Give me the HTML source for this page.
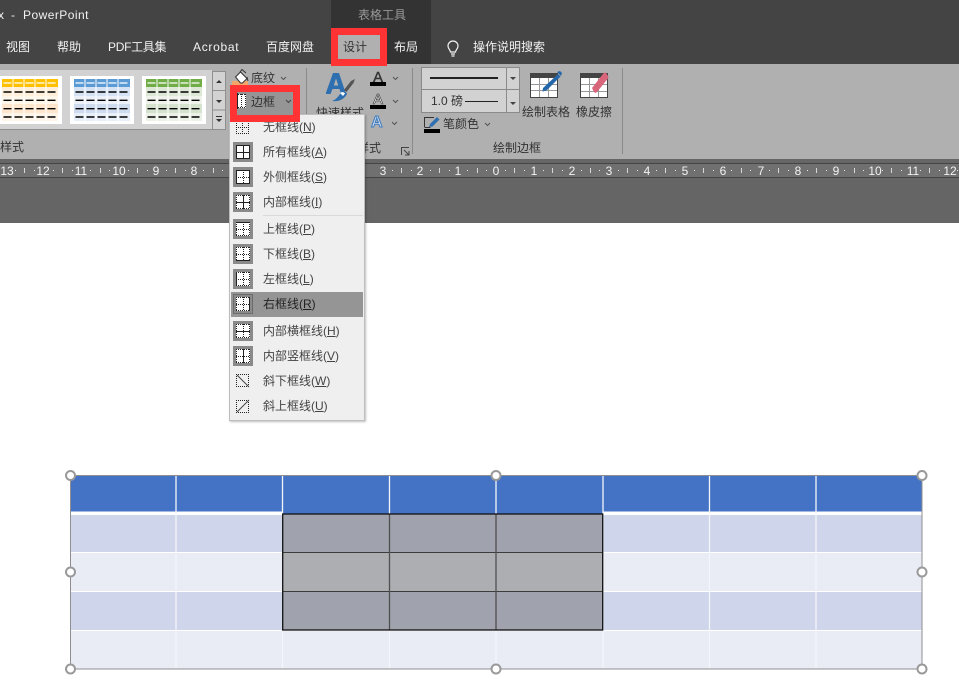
<!DOCTYPE html>
<html lang="zh"><head><meta charset="utf-8"><title>PowerPoint</title>
<style>
html,body{margin:0;padding:0;background:#fff}
#p{position:relative;width:959px;height:699px;overflow:hidden;background:#fff;font-family:"Liberation Sans","Noto Sans CJK SC",sans-serif;font-size:12px}
.b,.t,svg.a{position:absolute}
.t{white-space:nowrap;line-height:16px;font-size:12px;color:#333}
.w{color:#f2f2f2}
.m{color:#444}
u{text-underline-offset:1px}
</style></head><body><div id="p">
<div class="b" style="left:0;top:0;width:959px;height:64px;background:#444"></div>
<div class="b" style="left:331px;top:0;width:100px;height:64px;background:#333"></div>
<div class="b" style="left:0;top:64px;width:959px;height:95px;background:#b0b0b0"></div>
<div class="b" style="left:0;top:159px;width:959px;height:4px;background:#666"></div>
<div class="b" style="left:0;top:163px;width:959px;height:15px;background:#707070;border-top:1px solid #454545;border-bottom:1px solid #454545;box-sizing:border-box"></div>
<div class="b" style="left:0;top:178px;width:959px;height:45px;background:#656565"></div>

<span class="t w" style="left:-2px;top:7px">x</span><span class="t w" style="left:11px;top:7px">-</span>
<span class="t w" style="left:23px;top:7px;letter-spacing:.45px">PowerPoint</span>
<span class="t" style="left:358px;top:7px;color:#999">表格工具</span>
<span class="t w" style="left:6px;top:39px">视图</span>
<span class="t w" style="left:57px;top:39px">帮助</span>
<span class="t w" style="left:108px;top:39px;letter-spacing:-.3px">PDF工具集</span>
<span class="t w" style="left:193px;top:39px;letter-spacing:.7px">Acrobat</span>
<span class="t w" style="left:266px;top:39px">百度网盘</span>
<span class="t w" style="left:394px;top:39px">布局</span>
<span class="t w" style="left:473px;top:39px">操作说明搜索</span>
<svg class="a" style="left:445px;top:39px" width="16" height="20" viewBox="0 0 16 20" fill="none" stroke="#f2f2f2" stroke-width="1.2"><path d="M5.500 13c0-2-2.500-3-2.500-6a5 5 0 0 1 10 0c0 3-2.500 4-2.500 6z"/><path d="M6 15h4M6.500 17h3"/></svg>

<div class="b" style="left:331px;top:28px;width:56px;height:38px;background:#ff3333"></div>
<div class="b" style="left:338px;top:35px;width:42px;height:24px;background:#b0b0b0"></div>
<span class="t" style="left:343px;top:39px">设计</span>

<!-- gallery -->
<svg class="a" style="left:0;top:64px" width="252" height="70" viewBox="0 64 252 70">
<defs>
<g id="dk" stroke="#000" stroke-width="1.400"><path d="M1.500 92h8M12.500 92h8M23.500 92h8M34.500 92h8M45.500 92h8M1.500 100.300h8M12.500 100.300h8M23.500 100.300h8M34.500 100.300h8M45.500 100.300h8M1.500 108.700h8M12.500 108.700h8M23.500 108.700h8M34.500 108.700h8M45.500 108.700h8M1.500 117h8M12.500 117h8M23.500 117h8M34.500 117h8M45.500 117h8"/></g>
<g id="wh" stroke="#fff" stroke-width="1.200"><path d="M1.500 83h8M12.500 83h8M23.500 83h8M34.500 83h8M45.500 83h8"/></g>
<g id="gr" stroke="#fff" stroke-width="1"><path d="M11 79v42M22 79v42M33 79v42M44 79v42"/></g>
</defs>
<rect x="-10" y="70" width="222" height="59.500" fill="#d2d2d2"/>
<path d="M0 129.500h212" stroke="#8f8f8f"/>
<rect x="-2" y="76" width="64" height="48" fill="#fff"/>
<rect x="70" y="76" width="64" height="48" fill="#fff"/>
<rect x="142" y="76" width="64" height="48" fill="#fff"/>
<g transform="translate(2)"><rect y="79" width="56" height="8" fill="#ffc000"/><rect y="87" width="56" height="9" fill="#ffeeda"/><rect y="96" width="56" height="8" fill="#fff6ea"/><rect y="104" width="56" height="9" fill="#ffe6cc"/><rect y="113" width="56" height="8" fill="#fff4e8"/><use href="#gr"/><use href="#dk"/><use href="#wh"/></g>
<g transform="translate(74)"><rect y="79" width="56" height="8" fill="#5b9bd5"/><rect y="87" width="56" height="9" fill="#d5e2f3"/><rect y="96" width="56" height="8" fill="#ebf0f9"/><rect y="104" width="56" height="9" fill="#cfdcf0"/><rect y="113" width="56" height="8" fill="#e9eff8"/><use href="#gr"/><use href="#dk"/><use href="#wh"/></g>
<g transform="translate(146)"><rect y="79" width="56" height="8" fill="#70ad47"/><rect y="87" width="56" height="9" fill="#dce7d6"/><rect y="96" width="56" height="8" fill="#eef2ea"/><rect y="104" width="56" height="9" fill="#d5e2cd"/><rect y="113" width="56" height="8" fill="#ecf1e8"/><use href="#gr"/><use href="#dk"/><use href="#wh"/></g>
<rect x="212.500" y="71.500" width="13" height="19" fill="#d2d2d2" stroke="#8f8f8f"/>
<rect x="212.500" y="90.500" width="13" height="19.500" fill="#d2d2d2" stroke="#8f8f8f"/>
<rect x="212.500" y="110" width="13" height="19.500" fill="#d2d2d2" stroke="#8f8f8f"/>
<path d="M216 83l3-3 3 3zM216 100l3 3 3-3zM216 116h6v1h-6zM216 119l3 3 3-3z" fill="#333"/>
<!-- bucket -->
<rect x="232" y="81" width="16" height="4" fill="#f4a56a"/>
<path d="M235.500 77l5-5 6.500 6.500-4.500 4.500h-2z" fill="#fff" stroke="#333"/>
<path d="M240 72l2-2.500 4 3.500M247 77l1 4" stroke="#333" fill="none"/>
</svg>
<span class="t" style="left:251px;top:70px">底纹</span>
<svg class="a" style="left:280px;top:76px" width="7" height="5" fill="none" stroke="#555"><path d="M1 1l2.500 2.500L6 1"/></svg>
<span class="t" style="left:0;top:139px">样式</span>

<!-- separators -->
<div class="b" style="left:306px;top:68px;width:1px;height:86px;background:#8a8a8a"></div>
<div class="b" style="left:412px;top:68px;width:1px;height:86px;background:#8a8a8a"></div>
<div class="b" style="left:622px;top:68px;width:1px;height:86px;background:#8a8a8a"></div>

<!-- quick styles -->
<span class="t" style="left:316px;top:105px">快速样式</span>
<svg class="a" style="left:326px;top:70px" width="32" height="34" viewBox="326 70 32 34">
<path d="M333 73h6l7 21h-5l-1.500-5h-7l-2 5h-5zM336 78.500l-2.200 7h4.500z" fill="#2e6fb0" fill-rule="evenodd"/>
<path d="M344 90l7-9 4-2-1.500 4-7 9z" fill="#555"/>
<path d="M332 101c5 1 12-1 15-7 0-2-3-3-5-2-3 2-4 7-10 9z" fill="#2e6fb0"/>
<path d="M340 93c2-1.500 4-1 5 .5l-2 2.500c-1-1-2-2-3-3z" fill="#fff"/>
</svg>
<span class="t" style="left:373px;top:70px;font-size:15px;color:#333;-webkit-text-stroke:.4px #333">A</span>
<div class="b" style="left:370px;top:82px;width:16px;height:4px;background:#000"></div>
<span class="t" style="left:373px;top:92px;font-size:15px;color:#fff;-webkit-text-stroke:.6px #333">A</span>
<div class="b" style="left:370px;top:105px;width:16px;height:4px;background:#000"></div>
<span class="t" style="left:371px;top:115px;font-size:16px;font-weight:bold;color:#c8d8ee;-webkit-text-stroke:1px #3e7cbd">A</span>
<svg class="a" style="left:392px;top:76px" width="8" height="54" fill="none" stroke="#555"><path d="M1 1l2.500 2.500L6 1M1 24l2.500 2.500L6 24M0 46l2.500 2.500L5 46"/></svg>
<span class="t" style="left:321px;top:140px">艺术字样式</span>
<svg class="a" style="left:401px;top:147px" width="9" height="9" fill="none" stroke="#444"><path d="M.5 8V.5H8M3 3l4.500 4.500M8 4v4H4"/></svg>

<!-- draw borders -->
<div class="b" style="left:421px;top:67px;width:99px;height:23px;background:#d2d2d2;border:1px solid #8a8a8a;box-sizing:border-box"></div>
<div class="b" style="left:421px;top:89px;width:99px;height:24px;background:#d2d2d2;border:1px solid #8a8a8a;box-sizing:border-box"></div>
<div class="b" style="left:506px;top:67px;width:1px;height:46px;background:#8a8a8a"></div>
<div class="b" style="left:430px;top:77px;width:68px;height:2px;background:#222"></div>
<span class="t" style="left:431px;top:93px;color:#333">1.0 磅</span>
<div class="b" style="left:465px;top:101px;width:33px;height:1px;background:#222"></div>
<svg class="a" style="left:509px;top:75px" width="8" height="32" fill="#444"><path d="M1 2h6l-3 3zM1 27h6l-3 3z"/></svg>
<svg class="a" style="left:424px;top:115px" width="18" height="21" viewBox="0 0 18 21"><path d="M.5 12V2.500H10M.5 12.500h6" fill="none" stroke="#333"/><path d="M5 12l1-3 7-7 2.500 2.500-7 7z" fill="#2e6fb0"/><rect x="0" y="14" width="16" height="4" fill="#000"/></svg>
<span class="t" style="left:443px;top:116px">笔颜色</span>
<svg class="a" style="left:484px;top:122px" width="7" height="5" fill="none" stroke="#555"><path d="M1 1l2.500 2.500L6 1"/></svg>
<svg class="a" style="left:528px;top:68px" width="36" height="32" viewBox="528 68 36 32">
<rect x="530.500" y="73.500" width="27" height="24" fill="#fff" stroke="#444"/>
<rect x="530" y="73" width="28" height="5" fill="#444"/>
<path d="M531 84.500h26M531 90.500h26M539.500 78v19M548.500 78v19" stroke="#999"/>
<path d="M543 88l15-14 2.500 2.500-14 14-4 1z" fill="#2467a8"/><path d="M557 72l3-1 2 2-1 3z" fill="#2467a8"/>
</svg>
<span class="t" style="left:522px;top:104px">绘制表格</span>
<svg class="a" style="left:578px;top:68px" width="34" height="32" viewBox="578 68 34 32">
<rect x="580.500" y="73.500" width="27" height="24" fill="#fff" stroke="#444"/>
<rect x="580" y="73" width="28" height="5" fill="#444"/>
<path d="M581 84.500h26M581 91.500h26M589.500 78v19M598.500 78v19" stroke="#999"/>
<path d="M592 88l11-14c1-1.500 2-2 3-1l2 3c.7 1 .5 2-.5 3L597 92c-1 1-2 1-3 0z" fill="#d9657a"/>
</svg>
<span class="t" style="left:576px;top:104px">橡皮擦</span>
<span class="t" style="left:493px;top:140px">绘制边框</span>

<!-- ruler -->
<svg class="a" style="left:0;top:164px" width="959" height="13" viewBox="0 0 959 13">
<path d="M24.500 4v5M62.500 4v5M100.500 4v5M137.500 4v5M175.500 4v5M213.500 4v5M401.500 4v5M439.500 4v5M477.500 4v5M514.500 4v5M552.500 4v5M590.500 4v5M627.500 4v5M665.500 4v5M703.500 4v5M741.500 4v5M778.500 4v5M816.500 4v5M854.500 4v5M891.500 4v5M929.500 4v5" stroke="#d8d8d8"/>
<path d="M15.500 6v1M34.500 6v1M53.500 6v1M72.500 6v1M90.500 6v1M109.500 6v1M128.500 6v1M147.500 6v1M166.500 6v1M185.500 6v1M203.500 6v1M222.500 6v1M392.500 6v1M411.500 6v1M430.500 6v1M449.500 6v1M467.500 6v1M486.500 6v1M505.500 6v1M524.500 6v1M543.500 6v1M562.500 6v1M581.500 6v1M599.500 6v1M618.500 6v1M637.500 6v1M656.500 6v1M675.500 6v1M694.500 6v1M713.500 6v1M731.500 6v1M750.500 6v1M769.500 6v1M788.500 6v1M807.500 6v1M826.500 6v1M844.500 6v1M863.500 6v1M882.500 6v1M901.500 6v1M920.500 6v1M939.500 6v1M957.500 6v1" stroke="#e8e8e8"/>
<g fill="#f2f2f2" font-family="Liberation Sans" font-size="12" text-anchor="middle">
<text x="7" y="11">13</text><text x="43" y="11">12</text><text x="81" y="11">11</text><text x="119" y="11">10</text><text x="156" y="11">9</text><text x="194" y="11">8</text><text x="383" y="11">3</text><text x="420" y="11">2</text><text x="458" y="11">1</text><text x="496" y="11">0</text><text x="534" y="11">1</text><text x="572" y="11">2</text><text x="609" y="11">3</text><text x="647" y="11">4</text><text x="685" y="11">5</text><text x="723" y="11">6</text><text x="761" y="11">7</text><text x="798" y="11">8</text><text x="836" y="11">9</text><text x="875" y="11">10</text><text x="913" y="11">11</text><text x="950" y="11">12</text>
</g></svg>

<!-- table -->
<svg class="a" style="left:0;top:460px" width="959" height="225" viewBox="0 460 959 225">
<rect x="71" y="476" width="851" height="35.500" fill="#4472c4"/>
<rect x="282" y="476" width="321" height="38" fill="#4472c4"/>
<rect x="71" y="515" width="851" height="37" fill="#cfd5ea"/>
<rect x="71" y="553" width="851" height="38" fill="#e9ebf5"/>
<rect x="71" y="592" width="851" height="38" fill="#cfd5ea"/>
<rect x="71" y="631" width="851" height="38" fill="#e9ebf5"/>
<path d="M176 476v193M282.500 476v38M282.500 630v39M389.500 476v38M389.500 630v39M496 476v38M496 630v39M603 476v193M709.500 476v193M816 476v193" stroke="#f4f6fb" stroke-width="1.300"/>
<rect x="283" y="514" width="320" height="39" fill="#a0a2ad"/>
<rect x="283" y="553" width="320" height="38.500" fill="#adaeb2"/>
<rect x="283" y="591.500" width="320" height="39" fill="#a0a2ad"/>
<path d="M283 514h320M283 552.500h320M283 591.500h320" stroke="#3c3c3c" stroke-width="1"/>
<path d="M389.500 514v116M496 514v116" stroke="#505050" stroke-width="1.300"/>
<rect x="282.700" y="514" width="320" height="116" fill="none" stroke="#111" stroke-width="1.300"/>
<rect x="70.500" y="475.500" width="851.500" height="193.500" fill="none" stroke="#8f8f8f"/>
<g fill="#fff" stroke="#999" stroke-width="2"><circle cx="70.500" cy="475.500" r="4.500"/><circle cx="496" cy="475.500" r="4.500"/><circle cx="922" cy="475.500" r="4.500"/><circle cx="70.500" cy="572" r="4.500"/><circle cx="922" cy="572" r="4.500"/><circle cx="70.500" cy="669" r="4.500"/><circle cx="496" cy="669" r="4.500"/><circle cx="922" cy="669" r="4.500"/></g>
</svg>

<!-- menu -->
<div class="b" style="left:229px;top:114px;width:136px;height:307px;background:#efefef;border:1px solid #bdbdbd;box-sizing:border-box;box-shadow:1px 1px 2px rgba(0,0,0,.25)"></div>
<div class="b" style="left:263px;top:215px;width:100px;height:1px;background:#d9d9d9"></div>
<div class="b" style="left:231px;top:292px;width:132px;height:25px;background:#959595"></div>
<svg class="a" style="left:229px;top:114px" width="30" height="305" viewBox="229 114 30 305">
<defs>
<g id="bx"><rect x="233" y="0" width="20" height="20" fill="#8a8a8a"/><rect x="236" y="3" width="14" height="14" fill="#fff"/></g>
<path id="dg" d="M236 3.500h14M236 10.500h14M236 16.500h14M236.500 3v14M243.500 3v14M249.500 3v14" fill="none" stroke="#222" stroke-dasharray="1 1"/>
</defs>
<path transform="translate(0 116)" d="M236 5.500h13M236 11.500h13M236 17.500h13M236.500 5v13M242.500 5v13M248.500 5v13" fill="none" stroke="#222" stroke-dasharray="1 1"/>
<g transform="translate(0 142)"><use href="#bx"/><path d="M236.500 3.500h13v13h-13zM243.500 3v14M236 10.500h14" fill="none" stroke="#222"/></g>
<g transform="translate(0 167)"><use href="#bx"/><use href="#dg"/><path d="M236.500 3.500h13v13h-13z" fill="none" stroke="#222"/></g>
<g transform="translate(0 192)"><use href="#bx"/><use href="#dg"/><path d="M243.500 3v14M236 10.500h14" fill="none" stroke="#222"/></g>
<g transform="translate(0 219)"><use href="#bx"/><use href="#dg"/><path d="M236 3.500h14" stroke="#222"/></g>
<g transform="translate(0 244)"><use href="#bx"/><use href="#dg"/><path d="M236 16.500h14" stroke="#222"/></g>
<g transform="translate(0 269)"><use href="#bx"/><use href="#dg"/><path d="M236.500 3v14" stroke="#222"/></g>
<g transform="translate(0 294)"><rect x="233.500" y=".5" width="19" height="19" fill="#8a8a8a" stroke="#6c6c6c"/><rect x="236" y="3" width="14" height="14" fill="#fff"/><use href="#dg"/><path d="M249.500 3v14" stroke="#222"/></g>
</svg>
<svg class="a" style="left:229px;top:320px" width="30" height="100" viewBox="229 320 30 100">
<defs><rect id="bx2" x="233" y="0" width="20" height="20" fill="#8a8a8a"/></defs>
<g transform="translate(0 321)"><use href="#bx2"/><rect x="236" y="3" width="14" height="14" fill="#fff"/><path d="M236 3.500h14M236 16.500h14M236.500 3v14M243.500 3v14M249.500 3v14" fill="none" stroke="#222" stroke-dasharray="1 1"/><path d="M236 10.500h14" stroke="#222"/></g>
<g transform="translate(0 346)"><use href="#bx2"/><rect x="236" y="3" width="14" height="14" fill="#fff"/><path d="M236 3.500h14M236 10.500h14M236 16.500h14M236.500 3v14M249.500 3v14" fill="none" stroke="#222" stroke-dasharray="1 1"/><path d="M243.500 3v14" stroke="#222"/></g>
<path d="M236 374.500h13M236 386.500h13M236.500 374v13M248.500 374v13" fill="none" stroke="#222" stroke-dasharray="1 1"/><path d="M237 375l12 12" stroke="#444"/>
<path d="M236 400.500h13M236 412.500h13M236.500 400v13M248.500 400v13" fill="none" stroke="#222" stroke-dasharray="1 1"/><path d="M237 412l12-12" stroke="#444"/>
</svg>
<span class="t m" style="left:263px;top:119px">无框线(<u>N</u>)</span>
<span class="t m" style="left:263px;top:144px">所有框线(<u>A</u>)</span>
<span class="t m" style="left:263px;top:169px">外侧框线(<u>S</u>)</span>
<span class="t m" style="left:263px;top:194px">内部框线(<u>I</u>)</span>
<span class="t m" style="left:263px;top:221px">上框线(<u>P</u>)</span>
<span class="t m" style="left:263px;top:246px">下框线(<u>B</u>)</span>
<span class="t m" style="left:263px;top:271px">左框线(<u>L</u>)</span>
<span class="t" style="left:263px;top:296px;color:#222">右框线(<u>R</u>)</span>
<span class="t m" style="left:263px;top:323px">内部横框线(<u>H</u>)</span>
<span class="t m" style="left:263px;top:348px">内部竖框线(<u>V</u>)</span>
<span class="t m" style="left:263px;top:373px">斜下框线(<u>W</u>)</span>
<span class="t m" style="left:263px;top:398px">斜上框线(<u>U</u>)</span>

<!-- border button -->
<div class="b" style="left:230px;top:85px;width:70px;height:37px;background:#ff3333"></div>
<div class="b" style="left:237px;top:92px;width:56px;height:23px;background:#959595"></div>
<svg class="a" style="left:237px;top:93px" width="10" height="16" viewBox="0 0 10 16"><rect x="1" y="1" width="8" height="14" fill="#fff"/><path d="M8.500 1v14M4.500 1v14M1 1.500h8M1 14.500h8" fill="none" stroke="#222" stroke-dasharray="1 1"/><path d="M.5 0v16" stroke="#222"/></svg>
<span class="t" style="left:251px;top:94px">边框</span>
<svg class="a" style="left:285px;top:99px" width="7" height="5" fill="none" stroke="#444"><path d="M1 1l2.500 2.500L6 1"/></svg>
</div></body></html>
